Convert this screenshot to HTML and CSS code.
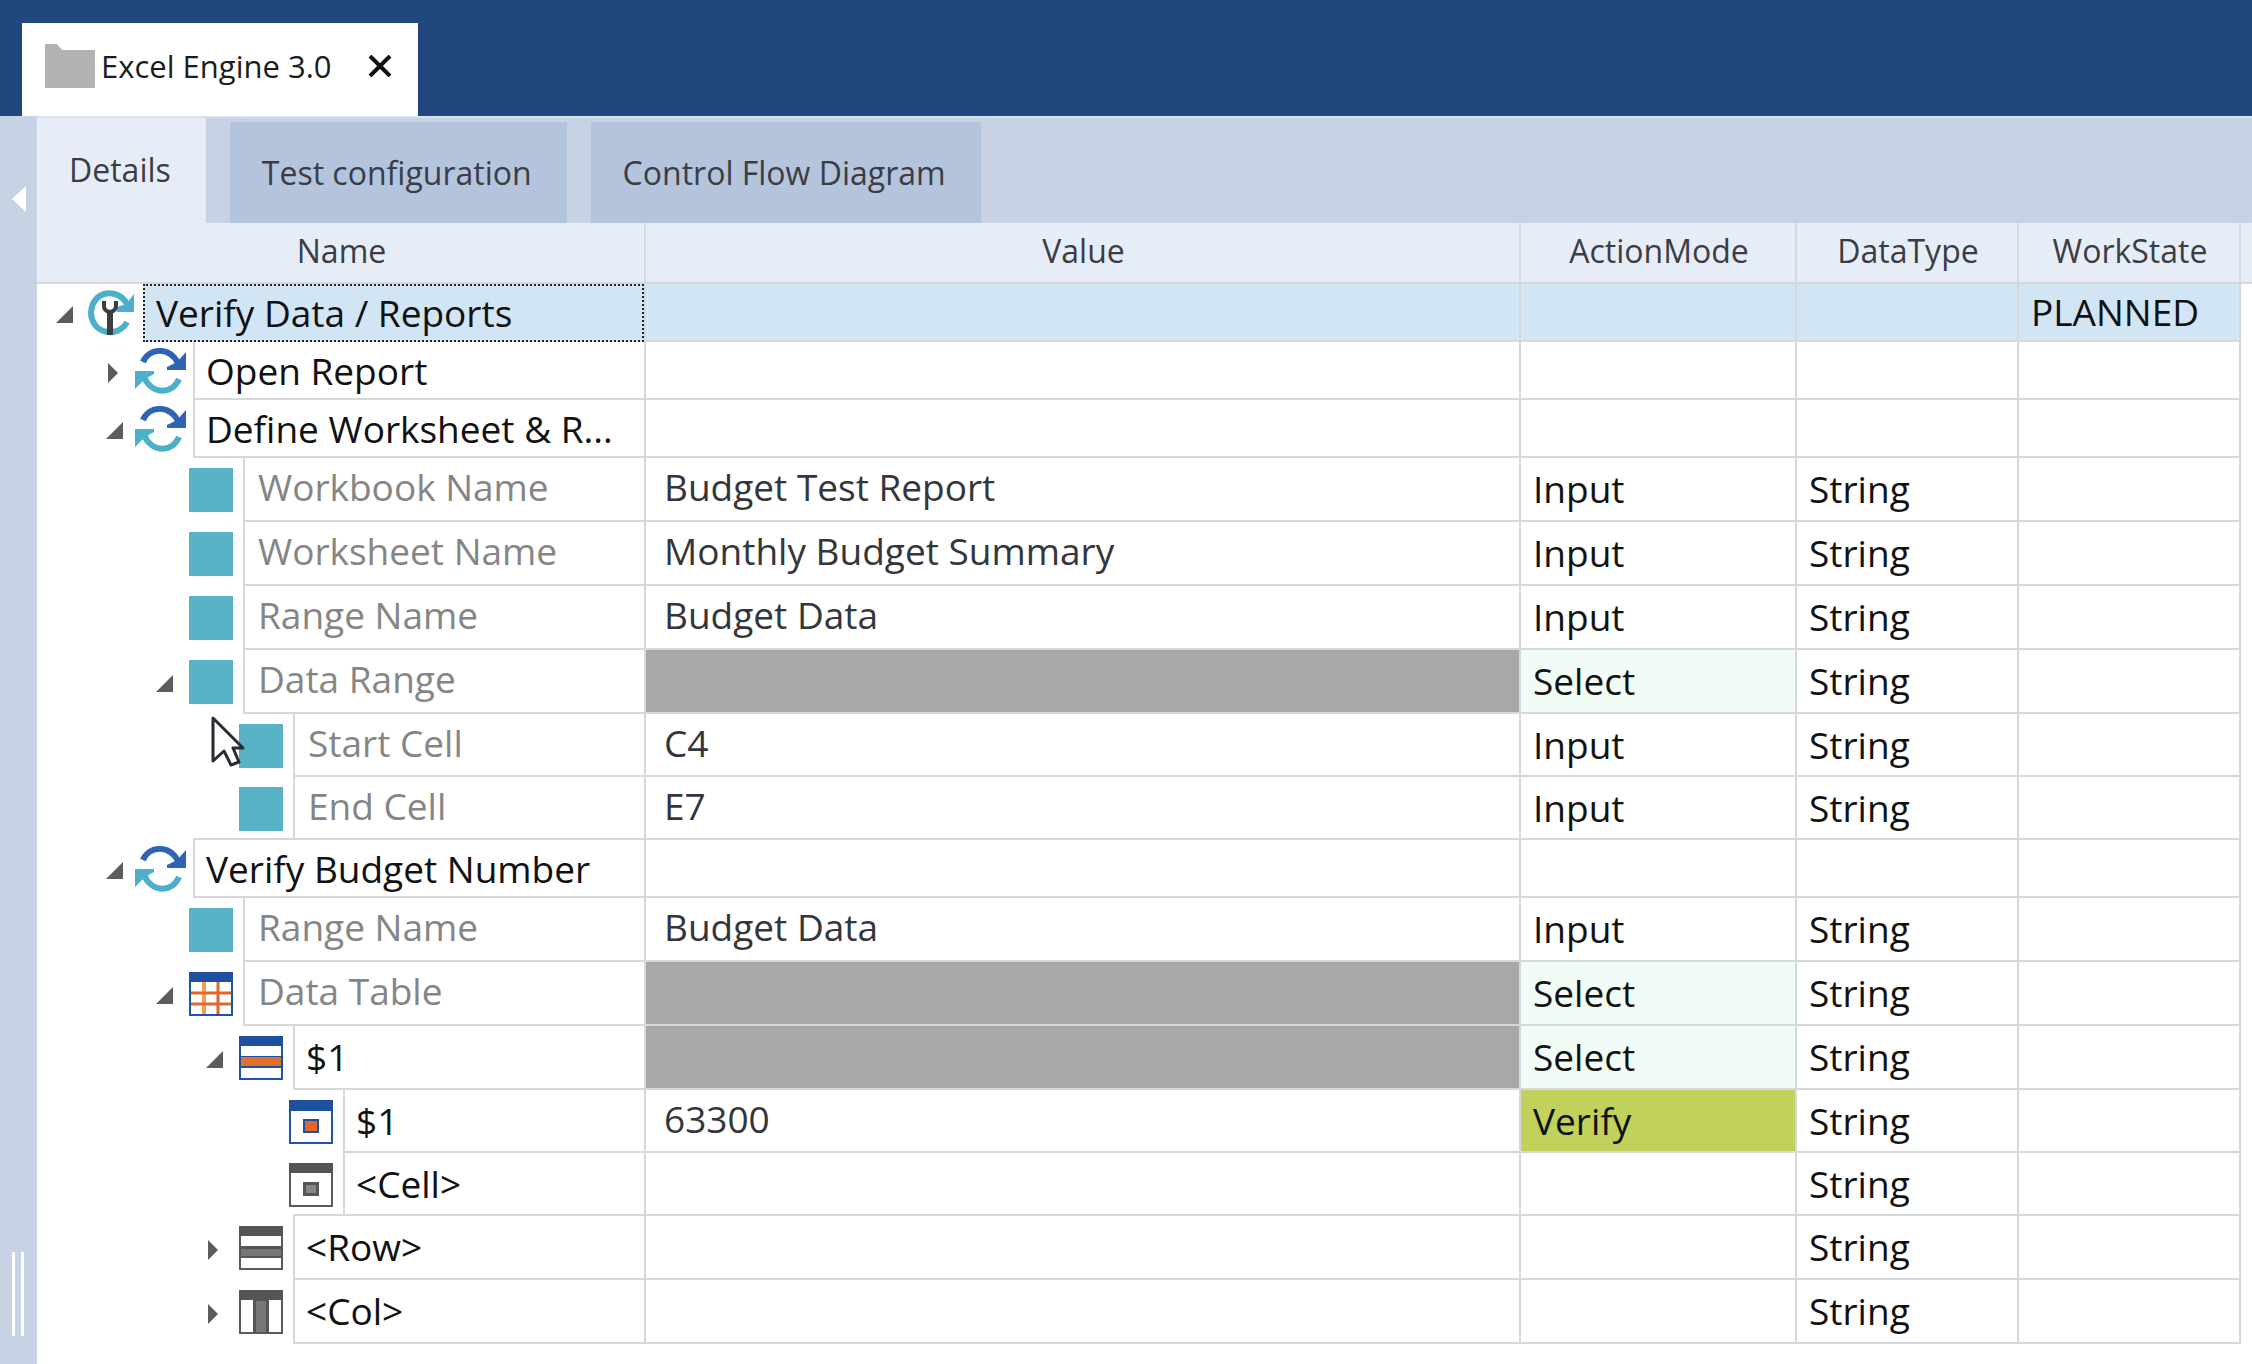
FILE: index.html
```html
<!DOCTYPE html>
<html lang="en">
<head>
    <meta charset="UTF-8">
    <meta name="viewport" content="width=device-width, initial-scale=1.0">
    <title>Excel Engine 3.0</title>
    <link rel="stylesheet" href="styles.css">
</head>
<body>
    <!-- shared icons -->
    <svg class="sprite" aria-hidden="true">
        <symbol id="open" viewBox="0 0 20 28">
            <path d="M18 7v17H1z" fill="#5c5c5c"/>
        </symbol>
        <symbol id="closed" viewBox="0 0 20 28">
            <path d="M3 6l10 10-10 10z" fill="#5c5c5c"/>
        </symbol>
        <symbol id="testcase" viewBox="0 0 52 46">
            <path d="M42 32C34 48 7 45 6 23C7 0 33-3 42 14" fill="none" stroke="#4db0ca" stroke-width="6"/>
            <path d="M49 4v18H32v-5l9-3z" fill="#4db0ca"/>
            <path d="M19 11v5q0 5 6 6q6-1 6-6v-5" fill="none" stroke="#3a3d42" stroke-width="4"/>
            <path d="M25 20v25" stroke="#3a3d42" stroke-width="6"/>
        </symbol>
        <symbol id="step" viewBox="0 0 52 46">
            <path d="M8 14C14 0 34-2 43 15" fill="none" stroke="#2f63b4" stroke-width="6"/>
            <path d="M51 4v18H32v-3l10-5z" fill="#2f63b4"/>
            <path d="M44 31C37 47 17 47 9 29" fill="none" stroke="#4db0ca" stroke-width="6"/>
            <path d="M0 41V23h19v3l-9 5z" fill="#4db0ca"/>
        </symbol>
        <symbol id="attr" viewBox="0 0 52 46">
            <path d="M4 1h44v44H4z" fill="#58b2c6"/>
        </symbol>
        <symbol id="grid" viewBox="0 0 52 46">
            <path d="M5 2h42v42H5z" fill="#fff" stroke="#1f55a8" stroke-width="2"/>
            <path d="M4 1h44v10H4z" fill="#1f4f9f"/>
            <path d="M19 11v32" stroke="#f0a04e" stroke-width="4"/>
            <path d="M6 22h40M6 33h40M33 11v32" stroke="#e0662c" stroke-width="3"/>
        </symbol>
        <symbol id="row" viewBox="0 0 52 46">
            <path d="M5 2h42v42H5z" fill="#fff" stroke="#1f55a8" stroke-width="2"/>
            <path d="M4 1h44v10H4zM4 21h44v12H4z" fill="#1f4f9f"/>
            <path d="M6 22h40v9H6z" fill="#e0702c"/>
        </symbol>
        <symbol id="cell" viewBox="0 0 52 46">
            <path d="M5 2h42v42H5z" fill="#fff" stroke="#1f55a8" stroke-width="2"/>
            <path d="M4 1h44v11H4zM18 20h16v14H18z" fill="#1f4f9f"/>
            <path d="M20 22h12v10H20z" fill="#e0662c"/>
        </symbol>
        <symbol id="row-new" viewBox="0 0 52 46">
            <path d="M5 2h42v42H5z" fill="#fff" stroke="#5a5a5a" stroke-width="2"/>
            <path d="M4 1h44v10H4zM4 21h44v12H4z" fill="#555"/>
            <path d="M6 24h40v7H6z" fill="#777"/>
        </symbol>
        <symbol id="col-new" viewBox="0 0 52 46">
            <path d="M5 2h42v42H5z" fill="#fff" stroke="#5a5a5a" stroke-width="2"/>
            <path d="M4 1h44v10H4zM18 11h16v33H18z" fill="#555"/>
            <path d="M21 12h10v31H21z" fill="#777"/>
        </symbol>
        <symbol id="cell-new" viewBox="0 0 52 46">
            <path d="M5 2h42v42H5z" fill="#fff" stroke="#5a5a5a" stroke-width="2"/>
            <path d="M4 1h44v10H4zM18 20h16v14H18z" fill="#555"/>
            <path d="M21 23h10v8H21z" fill="#858585"/>
        </symbol>
    </svg>

    <header class="titlebar">
        <div class="doc-tab">
            <svg class="folder" viewBox="0 0 50 44"><path d="M0 0h12l5 6h33v38H0z" fill="#b2b2b2"/></svg>
            <span>Excel Engine 3.0</span>
            <button class="close" aria-label="Close">
                <svg viewBox="0 0 24 22"><path d="M2 1l20 20M22 1L2 21" stroke="#111" stroke-width="4"/></svg>
            </button>
        </div>
    </header>

    <div class="workspace">
        <aside class="splitter">
            <button class="collapse" aria-label="Collapse">
                <svg viewBox="0 0 14 26"><path d="M14 0v26L0 13z" fill="#fff"/></svg>
            </button>
            <div class="grip"></div>
        </aside>

        <main class="content">
            <nav class="tabs">
                <button class="tab active">Details</button>
                <button class="tab">Test configuration</button>
                <button class="tab">Control Flow Diagram</button>
            </nav>

            <table class="steps">
                <colgroup>
                    <col class="col-name">
                    <col>
                    <col class="col-mode">
                    <col class="col-type">
                    <col class="col-state">
                    <col class="col-rest">
                </colgroup>
                <thead>
                    <tr><th>Name</th><th>Value</th><th>ActionMode</th><th>DataType</th><th>WorkState</th><th></th></tr>
                </thead>
                <tbody>
                    <tr class="group selected">
                        <td class="name"><div class="node level-0"><svg class="toggle"><use href="#open"/></svg><svg class="icon"><use href="#testcase"/></svg><span class="label">Verify Data / Reports</span></div></td>
                        <td></td><td></td><td></td><td>PLANNED</td>
                    </tr>
                    <tr class="group">
                        <td class="name"><div class="node level-1"><svg class="toggle"><use href="#closed"/></svg><svg class="icon"><use href="#step"/></svg><span class="label">Open Report</span></div></td>
                        <td></td><td></td><td></td><td></td>
                    </tr>
                    <tr class="group">
                        <td class="name"><div class="node level-1"><svg class="toggle"><use href="#open"/></svg><svg class="icon"><use href="#step"/></svg><span class="label">Define Worksheet &amp; R...</span></div></td>
                        <td></td><td></td><td></td><td></td>
                    </tr>
                    <tr>
                        <td class="name"><div class="node level-2"><svg class="toggle"></svg><svg class="icon"><use href="#attr"/></svg><span class="label muted">Workbook Name</span></div></td>
                        <td class="value">Budget Test Report</td><td>Input</td><td>String</td><td></td>
                    </tr>
                    <tr>
                        <td class="name"><div class="node level-2"><svg class="toggle"></svg><svg class="icon"><use href="#attr"/></svg><span class="label muted">Worksheet Name</span></div></td>
                        <td class="value">Monthly Budget Summary</td><td>Input</td><td>String</td><td></td>
                    </tr>
                    <tr>
                        <td class="name"><div class="node level-2"><svg class="toggle"></svg><svg class="icon"><use href="#attr"/></svg><span class="label muted">Range Name</span></div></td>
                        <td class="value">Budget Data</td><td>Input</td><td>String</td><td></td>
                    </tr>
                    <tr>
                        <td class="name"><div class="node level-2"><svg class="toggle"><use href="#open"/></svg><svg class="icon"><use href="#attr"/></svg><span class="label muted">Data Range</span></div></td>
                        <td class="disabled"></td><td class="select">Select</td><td>String</td><td></td>
                    </tr>
                    <tr class="leaf">
                        <td class="name"><div class="node level-3"><svg class="toggle"></svg><svg class="icon"><use href="#attr"/></svg><span class="label muted">Start Cell</span>
                            <svg class="pointer" viewBox="0 0 34 52"><path d="M2 2v43l11-10 7 14 8-3-6-14h10z" fill="#fff" stroke="#2b2b38" stroke-width="3" stroke-linejoin="round"/></svg></div></td>
                        <td class="value">C4</td><td>Input</td><td>String</td><td></td>
                    </tr>
                    <tr class="leaf">
                        <td class="name"><div class="node level-3"><svg class="toggle"></svg><svg class="icon"><use href="#attr"/></svg><span class="label muted">End Cell</span></div></td>
                        <td class="value">E7</td><td>Input</td><td>String</td><td></td>
                    </tr>
                    <tr class="group">
                        <td class="name"><div class="node level-1"><svg class="toggle"><use href="#open"/></svg><svg class="icon"><use href="#step"/></svg><span class="label">Verify Budget Number</span></div></td>
                        <td></td><td></td><td></td><td></td>
                    </tr>
                    <tr>
                        <td class="name"><div class="node level-2"><svg class="toggle"></svg><svg class="icon"><use href="#attr"/></svg><span class="label muted">Range Name</span></div></td>
                        <td class="value">Budget Data</td><td>Input</td><td>String</td><td></td>
                    </tr>
                    <tr>
                        <td class="name"><div class="node level-2"><svg class="toggle"><use href="#open"/></svg><svg class="icon"><use href="#grid"/></svg><span class="label muted">Data Table</span></div></td>
                        <td class="disabled"></td><td class="select">Select</td><td>String</td><td></td>
                    </tr>
                    <tr>
                        <td class="name"><div class="node level-3"><svg class="toggle"><use href="#open"/></svg><svg class="icon"><use href="#row"/></svg><span class="label">$1</span></div></td>
                        <td class="disabled"></td><td class="select">Select</td><td>String</td><td></td>
                    </tr>
                    <tr class="leaf">
                        <td class="name"><div class="node level-4"><svg class="toggle"></svg><svg class="icon"><use href="#cell"/></svg><span class="label">$1</span></div></td>
                        <td class="value">63300</td><td class="verify">Verify</td><td>String</td><td></td>
                    </tr>
                    <tr class="leaf">
                        <td class="name"><div class="node level-4"><svg class="toggle"></svg><svg class="icon"><use href="#cell-new"/></svg><span class="label">&lt;Cell&gt;</span></div></td>
                        <td></td><td></td><td>String</td><td></td>
                    </tr>
                    <tr>
                        <td class="name"><div class="node level-3"><svg class="toggle"><use href="#closed"/></svg><svg class="icon"><use href="#row-new"/></svg><span class="label">&lt;Row&gt;</span></div></td>
                        <td></td><td></td><td>String</td><td></td>
                    </tr>
                    <tr>
                        <td class="name"><div class="node level-3"><svg class="toggle"><use href="#closed"/></svg><svg class="icon"><use href="#col-new"/></svg><span class="label">&lt;Col&gt;</span></div></td>
                        <td></td><td></td><td>String</td><td></td>
                    </tr>
                </tbody>
            </table>
        </main>
    </div>
</body>
</html>
```
FILE: styles.css
```css
* {
    box-sizing: border-box;
}

body {
    margin: 0;
    min-height: 100vh;
    display: flex;
    flex-direction: column;
    font-family: "Open Sans", "Noto Sans", sans-serif;
    font-size: 32px;
    color: #3a3d45;
    background: #fff;
}

button {
    font: inherit;
    color: inherit;
    border: none;
    padding: 0;
    background: none;
    cursor: pointer;
}

svg {
    display: block;
    flex: none;
}

.sprite {
    position: absolute;
    width: 0;
    height: 0;
}

/* title bar */
.titlebar {
    display: flex;
    align-items: flex-end;
    height: 116px;
    padding-left: 22px;
    background: #22467e;
}

.doc-tab {
    display: flex;
    align-items: center;
    height: 93px;
    padding: 0 26px 8px 23px;
    font-size: 31px;
    background: #fff;
    color: #1c1c1c;
}

.folder {
    width: 50px;
    height: 44px;
    margin-right: 6px;
}

.close {
    margin-left: 36px;
}

.close svg {
    width: 24px;
    height: 22px;
}

.workspace {
    flex: 1;
    display: flex;
}

/* left strip */
.splitter {
    width: 37px;
    display: flex;
    flex-direction: column;
    justify-content: space-between;
    padding: 70px 12px 28px;
    background: #c7d2e4;
}

.collapse svg {
    width: 14px;
    height: 26px;
}

.grip {
    width: 12px;
    height: 84px;
    border: solid #fff;
    border-width: 0 3px;
}

.content {
    flex: 1;
    min-width: 0;
}

/* sub tabs */
.tabs {
    display: flex;
    align-items: flex-end;
    gap: 24px;
    height: 107px;
    background: #c7d2e4;
    border-top: 2px solid #d8e1ee;
}

.tab {
    height: 101px;
    padding: 0 35px 0 32px;
    background: #b4c4dc;
}

.tab.active {
    height: 105px;
    padding: 0 35px 2px 32px;
    background: #e7edf6;
}

/* tree table */
.steps {
    width: 100%;
    table-layout: fixed;
    border-collapse: separate;
    border-spacing: 0;
    font-size: 37px;
    line-height: 44px;
    color: #111;
}

.col-name {
    width: 609px;
}

.col-mode {
    width: 276px;
}

.col-type,
.col-state {
    width: 222px;
}

.col-rest {
    width: 11px;
}

th {
    height: 61px;
    padding: 0 0 4px 2px;
    font-size: 32px;
    font-weight: 400;
    color: #3a3d45;
    background: #e7edf6;
    border-right: 2px solid #d6d8dc;
    border-bottom: 2px solid #d6d8dc;
}

th:last-child {
    border-right: none;
}

tr {
    --row: 64px;
}

tr.leaf {
    --row: 63px;
}

tr.group {
    --row: 58px;
}

td {
    height: var(--row);
    padding: 0 0 0 12px;
    border-right: 2px solid #d6d8dc;
    border-bottom: 2px solid #d6d8dc;
    white-space: nowrap;
}

td.name {
    padding: 0;
    border-bottom: none;
}

td.value {
    padding: 0 0 4px 18px;
    color: #33363c;
}

td.disabled {
    background: #a8a8a8;
}

td.select {
    background: #f2fcf6;
}

td.verify {
    background: #c1d15b;
}

.selected td,
.selected .label {
    background: #d2e5f5;
}

.selected td.name {
    background: none;
}

.node {
    position: relative;
    display: flex;
    align-items: center;
    height: var(--row);
}

.selected .node {
    z-index: 1;
}

.level-0 { padding-left: 18px; }
.level-1 { padding-left: 68px; }
.level-2 { padding-left: 118px; }
.level-3 { padding-left: 168px; }
.level-4 { padding-left: 218px; }

.toggle {
    width: 20px;
    height: 28px;
    margin-right: 10px;
}

.icon {
    width: 52px;
    height: 46px;
    margin-right: 6px;
}

/* the top edge shares the line of the row above */
.label {
    flex: 1;
    height: calc(var(--row) + 2px);
    margin-top: -2px;
    padding: 9px 0 0 11px;
    border: solid #d6d8dc;
    border-width: 2px 0 2px 2px;
}

.group .label {
    padding-top: 7px;
}

.label.muted {
    padding: 7px 0 0 13px;
    color: #858585;
}

.selected .label {
    height: var(--row);
    margin-top: 0;
    padding-top: 5px;
    border: 2px dotted #222;
}

.pointer {
    position: absolute;
    top: 2px;
    left: 174px;
    width: 34px;
    height: 52px;
}
```
